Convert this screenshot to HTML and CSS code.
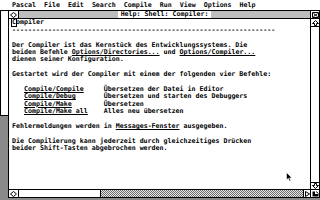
FILE: index.html
```html
<!DOCTYPE html>
<html>
<head>
<meta charset="utf-8">
<link rel="stylesheet" href="styles.css">
</head>
<body>
<div class="screen">
  <div class="menubar">
    <span>Pascal</span><span>File</span><span>Edit</span><span>Search</span><span>Compile</span><span>Run</span><span>View</span><span>Options</span><span>Help</span>
  </div>
  <div class="desk">
    <div class="backwin"></div>
    <div class="window">
      <div class="titlebar">
        <div class="closer">
          <svg width="7" height="6" viewBox="0 0 7 6"><path d="M3.5 0.5 L6.5 3 L3.5 5.5 L0.5 3 Z" fill="none" stroke="#000" stroke-width="1"/></svg>
        </div>
        <div class="title"><span class="title-text">Help: Shell: Compiler:</span></div>
        <div class="fuller">
          <svg width="7" height="6" viewBox="0 0 7 6"><path d="M0.5 0.5 H6.5 V5.5 H0.5 Z M1.5 1.5 L5.5 4.5 M5.5 1.5 L1.5 4.5" fill="none" stroke="#000" stroke-width="1"/></svg>
        </div>
      </div>
      <div class="body">
        <pre class="content"><span class="cursor">C</span>ompiler
------------------------------------------------------------------

Der Compiler ist das Kernstück des Entwicklungssystems. Die
beiden Befehle <u class="link">Options/Directories...</u> und <u class="link">Options/Compiler...</u>
dienen seiner Konfiguration.

Gestartet wird der Compiler mit einem der folgenden vier Befehle:

   <u class="link">Compile/Compile</u>     Übersetzen der Datei in Editor
   <u class="link">Compile/Debug</u>       Übersetzen und starten des Debuggers
   <u class="link">Compile/Make</u>        Übersetzen
   <u class="link">Compile/Make_all</u>    Alles neu übersetzen

Fehlermeldungen werden in <u class="link">Messages-Fenster</u> ausgegeben.

Die Compilierung kann jederzeit durch gleichzeitiges Drücken
beider Shift-Tasten abgebrochen werden.</pre>
        <div class="vscroll">
          <div class="arrow arrow-up">
            <svg width="7" height="6" viewBox="0 0 7 6"><path d="M3.5 0.5 L6.5 3.5 H4.5 V5.5 H2.5 V3.5 H0.5 Z" fill="none" stroke="#000" stroke-width="1"/></svg>
          </div>
          <div class="vtrack"></div>
          <div class="arrow arrow-down">
            <svg width="7" height="6" viewBox="0 0 7 6"><path d="M3.5 5.5 L6.5 2.5 H4.5 V0.5 H2.5 V2.5 H0.5 Z" fill="none" stroke="#000" stroke-width="1"/></svg>
          </div>
        </div>
        <div class="hscroll">
          <div class="harrow harrow-left">
            <svg width="7" height="6" viewBox="0 0 7 6"><path d="M0.5 3 L3.5 0.5 L6.5 3 L3.5 5.5 Z" fill="none" stroke="#000" stroke-width="1"/></svg>
          </div>
          <div class="htrack"><div class="hslider"></div></div>
          <div class="harrow harrow-right">
            <svg width="5" height="6" viewBox="0 0 5 6"><path d="M0.5 0.5 L4.5 3 L0.5 5.5 Z" fill="none" stroke="#000" stroke-width="1"/></svg>
          </div>
        </div>
        <div class="sizer">
          <svg width="7" height="6" viewBox="0 0 7 6"><path d="M0.5 0.5 H3 V3 H6.5 V5.5 H0.5 Z" fill="#000"/><path d="M4 0.5 L6.5 2.5" stroke="#000" stroke-width="1"/></svg>
        </div>
      </div>
    </div>
  </div>
  <svg class="mouse" width="7" height="10" viewBox="0 0 7 10"><path d="M0.5 0.5 L0.5 8 L2.3 6.3 L3.6 9.2 L4.8 8.6 L3.6 5.9 L6 5.9 Z" fill="#000" stroke="#fff" stroke-width="0.6"/></svg>
</div>
</body>
</html>
```

FILE: styles.css
```css
* { box-sizing: border-box; }
html, body { margin: 0; padding: 0; }
body {
  width: 320px;
  height: 200px;
  overflow: hidden;
  background: #8a8a8a;
  font-family: "DejaVu Sans Mono", "Liberation Mono", monospace;
  font-size: 6.645px;
  font-weight: bold;
  color: #000;
}
.screen {
  position: relative;
  width: 320px;
  height: 200px;
}
.menubar {
  height: 11px;
  background: #fff;
  border-bottom: 1px solid #000;
  display: flex;
  gap: 8px;
  padding-left: 12px;
  line-height: 10px;
  white-space: pre;
}
.desk {
  display: flex;
  align-items: flex-start;
  height: 189px;
}
.backwin {
  width: 8px;
  height: 105px;
  background: #fff;
  border-left: 1px solid #000;
  border-bottom: 1px solid #000;
}
.window {
  width: 312px;
  height: 187px;
  background: #fff;
  border-left: 1px solid #000;
  border-right: 1px solid #000;
  border-bottom: 1px solid #000;
  display: flex;
  flex-direction: column;
}
.titlebar {
  height: 8px;
  border-bottom: 1px solid #000;
  display: grid;
  grid-template-columns: 10px 1fr 9px;
}
.closer {
  border-right: 1px solid #000;
  display: flex;
  align-items: center;
  justify-content: center;
}
.closer svg, .fuller svg, .arrow svg, .harrow svg, .sizer svg { display: block; }
.title {
  background: #bdbdbd;
  display: flex;
  justify-content: center;
  align-items: center;
}
.title-text {
  background: #fff;
  padding: 0 3px;
  line-height: 7px;
  white-space: pre;
}
.fuller {
  border-left: 1px solid #000;
  display: flex;
  align-items: center;
  justify-content: center;
}
.body {
  flex: 1;
  display: grid;
  grid-template-columns: 1fr 9px;
  grid-template-rows: 1fr 8px;
}
.content {
  margin: 0;
  padding: 0.4px 0 0 3px;
  font: inherit;
  line-height: 7.4px;
  white-space: pre;
  overflow: hidden;
}
.cursor {
  outline: 1px solid #000;
  outline-offset: -0.5px;
}
.link {
  text-decoration: underline;
  text-decoration-thickness: 1px;
  text-underline-offset: 1px;
}
.vscroll {
  border-left: 1px solid #000;
  display: flex;
  flex-direction: column;
}
.arrow {
  height: 8px;
  display: flex;
  align-items: center;
  justify-content: center;
}
.arrow-up { border-bottom: 1px solid #000; }
.arrow-down { border-top: 1px solid #000; height: 7px; }
.vtrack { flex: 1; background: #fff; }
.hscroll {
  border-top: 1px solid #000;
  display: flex;
}
.harrow {
  display: flex;
  align-items: center;
  justify-content: center;
}
.harrow-left { width: 10px; border-right: 1px solid #000; }
.harrow-right { width: 7px; border-left: 1px solid #000; }
.htrack {
  flex: 1;
  background: repeating-conic-gradient(#6e6e6e 0 25%, #e6e6e6 0 50%) 0 0 / 2px 2px;
}
.hslider {
  width: 82px;
  height: 100%;
  background: #fff;
  border-right: 1px solid #000;
}
.sizer {
  border-top: 1px solid #000;
  border-left: 1px solid #000;
  display: flex;
  align-items: center;
  justify-content: center;
}
.mouse {
  position: absolute;
  left: 286px;
  top: 172px;
}
```
